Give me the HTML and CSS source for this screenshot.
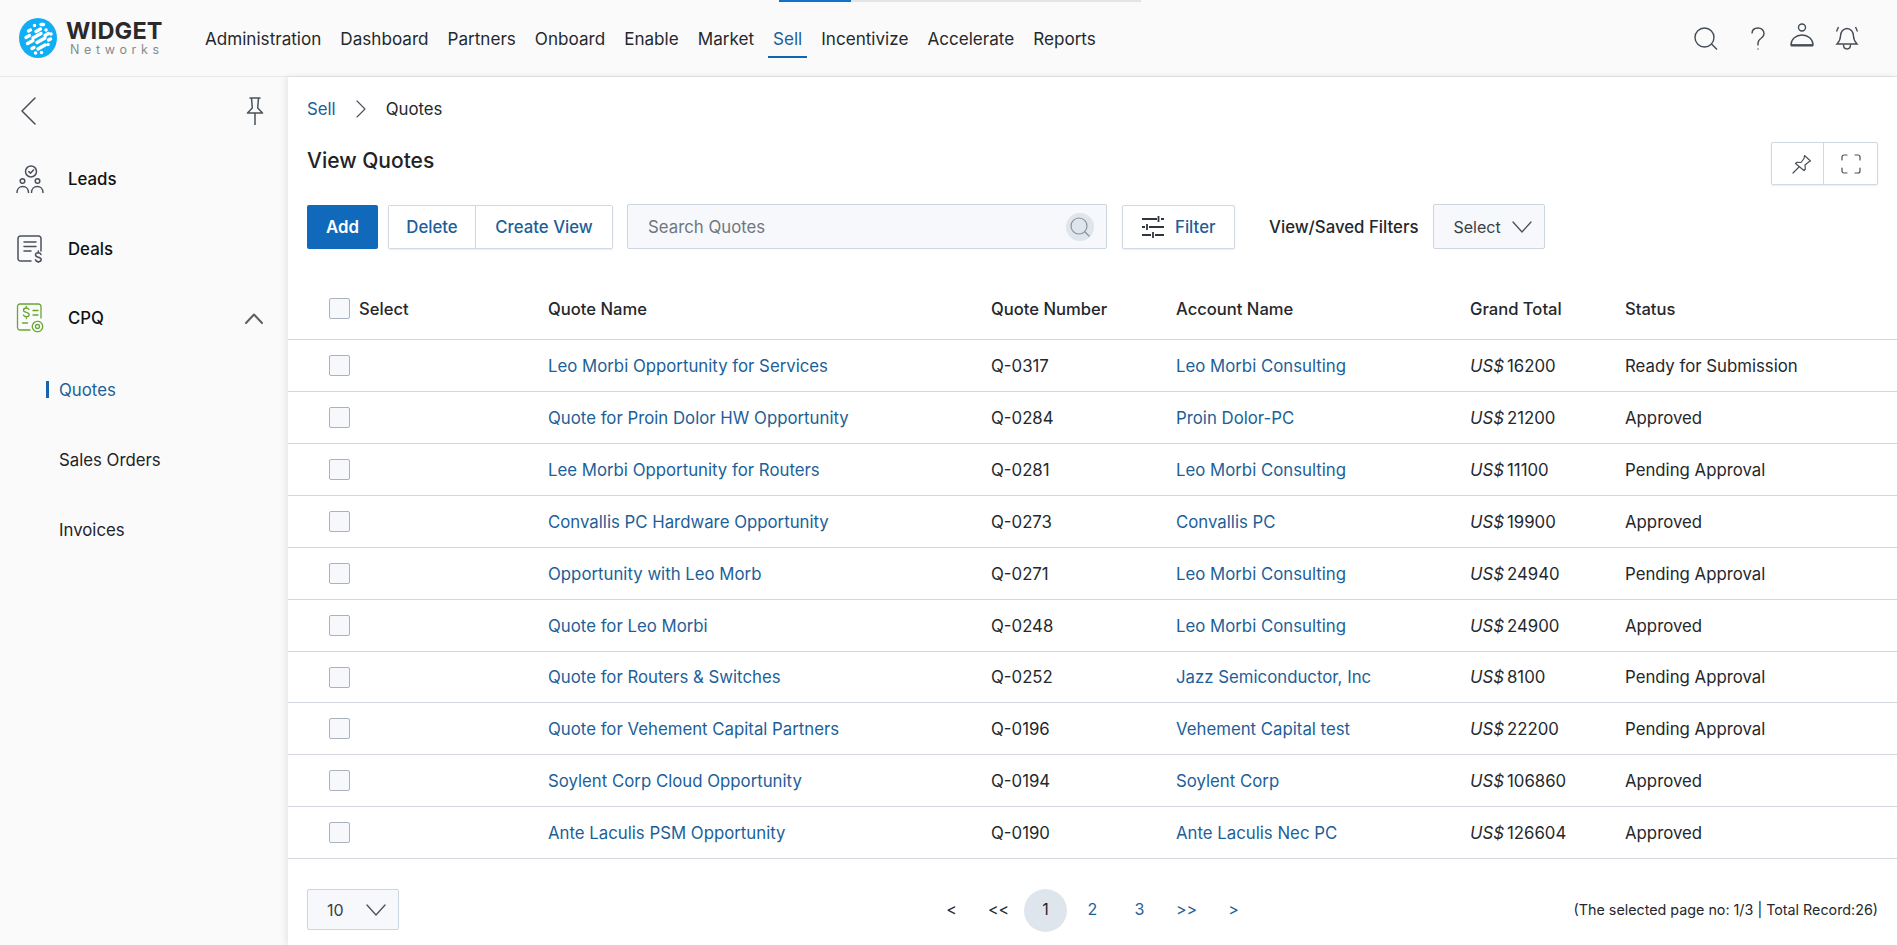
FILE: index.html
```html
<!DOCTYPE html>
<html lang="en">
<head>
<meta charset="utf-8">
<title>View Quotes</title>
<link rel="stylesheet" href="styles.css">
</head>
<body>
<div class="progress"><div class="progress-fill"></div></div>
<header class="topbar">
  <div class="logo">
    <svg class="logo-mark" viewBox="0 0 38 40" width="38" height="40">
      <ellipse cx="19" cy="20" rx="19" ry="20" fill="#11aef5"/>
      <g stroke="#fff" stroke-linecap="round" fill="none" stroke-width="3.400">
        <path d="M15.500 7.500h.1M22 6.500h2.500"/>
        <path d="M9.500 13l2 -1M17 13.500l4.500 -2.500M27 12h.1"/>
        <path d="M7 19.500l3.500 -2M14 20l8 -4.500M26 17.500l3.500 -2M32 16h.1"/>
        <path d="M8.500 25.500l5.500 -3M18 24.500l8 -4.500M29.500 22l2 -1"/>
        <path d="M13 30.500l2 -1M19 31l7 -4M29 26.500h.1"/>
        <path d="M16.500 35h.1M22.500 34.500h.1"/>
      </g>
    </svg>
    <div class="logo-text">
      <span class="logo-name">WIDGET</span>
      <span class="logo-sub">Networks</span>
    </div>
  </div>
  <nav class="topnav">
    <a class="topnav-item">Administration</a>
    <a class="topnav-item">Dashboard</a>
    <a class="topnav-item">Partners</a>
    <a class="topnav-item">Onboard</a>
    <a class="topnav-item">Enable</a>
    <a class="topnav-item">Market</a>
    <a class="topnav-item is-active">Sell</a>
    <a class="topnav-item">Incentivize</a>
    <a class="topnav-item">Accelerate</a>
    <a class="topnav-item">Reports</a>
  </nav>
  <div class="top-icons">
    <svg class="ti ti-search" viewBox="0 0 24 23" width="24" height="23"><circle cx="10.500" cy="10.500" r="9.500"/><path d="M17.500 17l5.500 5.500"/></svg>
    <svg class="ti ti-help" viewBox="0 0 14 24" width="14" height="24"><path d="M1 6.500C1 3 3.500 1 7 1s6 2.500 6 5.500c0 2.500-1.500 3.800-3.200 5C8 12.700 7 14 7 16.500v2"/><path d="M7 21.500v2" stroke-dasharray="1 1"/></svg>
    <svg class="ti ti-user" viewBox="0 0 24 24" width="24" height="24"><circle cx="12" cy="4.500" r="3.500"/><path d="M1 22c0-6 5-10 11-10s11 4 11 10z"/><path d="M1 22.500h22" stroke-width="2"/></svg>
    <svg class="ti ti-bell" viewBox="0 0 24 24" width="24" height="24"><path d="M5.500 10c0-4 2.800-7.500 6.500-7.500s6.500 3.500 6.500 7.500c0 4 1.200 5.500 3.500 8H2c2.300-2.500 3.500-4 3.500-8z"/><path d="M8.500 18.500c0 3 1.500 4.500 3.500 4.500s3.500-1.500 3.500-4.500"/><path d="M3.500 1L1.500 5.500M20.500 1l2 4.500"/></svg>
  </div>
</header>
<div class="layout">
  <aside class="sidebar">
    <div class="side-top">
      <svg class="si" viewBox="0 0 16 28" width="16" height="28"><path d="M15 1L2 14l13 13"/></svg>
      <svg class="si" viewBox="0 0 18 28" width="18" height="28"><path d="M4 1h10M5.500 1l.8 10L1.500 16h15L11.700 11l.8-10M9 16v12"/></svg>
    </div>
    <div class="side-item side-leads">
      <svg class="si side-icon" viewBox="0 0 28 28" width="28" height="28"><circle cx="15" cy="6.500" r="5.500"/><path d="M12.800 6.600l1.700 1.700 3-3.200"/><circle cx="6.500" cy="16" r="2.300"/><circle cx="21.500" cy="16" r="2.300"/><path d="M1 27.500c0-3.500 2.500-6 5.800-6s5.700 2.500 5.700 6M15.500 27.500c0-3.500 2.500-6 5.800-6s5.700 2.500 5.700 6"/></svg>
      <span class="side-label">Leads</span>
    </div>
    <div class="side-item side-deals">
      <svg class="si side-icon" viewBox="0 0 28 28" width="28" height="28"><path d="M15 26H4.500A2.500 2.500 0 0 1 2 23.500V3.500A2.500 2.500 0 0 1 4.500 1h18A2.500 2.500 0 0 1 25 3.500V16"/><path d="M8 7h12M8 11.500h12M8 16h7"/><path d="M25 19.500c-.5-1.200-1.600-1.700-2.700-1.700-1.500 0-2.800.8-2.800 2.200 0 3 5.700 1.500 5.700 4.500 0 1.400-1.300 2.200-2.900 2.200-1.200 0-2.300-.6-2.800-1.800M22.300 16v2M22.300 26.700v1.300"/></svg>
      <span class="side-label">Deals</span>
    </div>
    <div class="side-item side-cpq">
      <svg class="si side-icon is-green" viewBox="0 0 28 30" width="28" height="30"><path d="M14 27H4a2.500 2.500 0 0 1-2.500-2.500v-21A2.500 2.500 0 0 1 4 1h18.500A2.500 2.500 0 0 1 25 3.500V15"/><path d="M13 6.500c-.5-1-1.500-1.500-2.700-1.500-1.600 0-2.800.8-2.800 2.200 0 2.800 5.700 1.500 5.700 4.300 0 1.400-1.300 2.200-2.900 2.200-1.200 0-2.300-.6-2.800-1.600M10.300 3.500V5M10.300 13.700V15.500"/><path d="M17 7.500h5M17 12h5M6.500 20h5"/><circle cx="21.500" cy="23.500" r="5.200" stroke-dasharray="3 .6"/><circle cx="21.500" cy="23.500" r="2"/></svg>
      <span class="side-label">CPQ</span>
      <svg class="si side-caret" viewBox="0 0 18 11" width="18" height="11"><path d="M1 10l8-8.500 8 8.500"/></svg>
    </div>
    <div class="side-sub is-active"><span>Quotes</span></div>
    <div class="side-sub"><span>Sales Orders</span></div>
    <div class="side-sub"><span>Invoices</span></div>
  </aside>
  <main class="content">
    <div class="crumbs">
      <a class="crumb-link">Sell</a>
      <svg class="si crumb-sep" viewBox="0 0 10 18" width="10" height="18"><path d="M1 1l8 8-8 8"/></svg>
      <span>Quotes</span>
    </div>
    <div class="title-row">
      <h1 class="title">View Quotes</h1>
      <div class="tool-group">
        <button class="tool-btn tool-pin"><svg class="si" viewBox="0 0 20 20" width="20" height="20"><path d="M12.500 1.500l6 5.500-1.500 .7-4 3.300.3 4-1.300 1.500L3.500 9.500 5 8.300l4 .2 3-4z"/><path d="M7 13L1 19"/></svg></button>
        <button class="tool-btn tool-full"><svg class="si" viewBox="0 0 20 20" width="20" height="20"><path d="M1 6V3a2 2 0 0 1 2-2h3M14 1h3a2 2 0 0 1 2 2v3M19 14v3a2 2 0 0 1-2 2h-3M6 19H3a2 2 0 0 1-2-2v-3"/></svg></button>
      </div>
    </div>
    <div class="toolbar">
      <button class="btn-primary">Add</button>
      <div class="btn-group">
        <button class="btn-plain btn-delete">Delete</button>
        <button class="btn-plain btn-create">Create View</button>
      </div>
      <div class="search">
        <span class="search-text">Search Quotes</span>
        <span class="search-icon"><svg class="si" viewBox="0 0 20 20" width="20" height="20"><circle cx="9" cy="9" r="8"/><path d="M15 15l4 4"/></svg></span>
      </div>
      <button class="btn-filter">
        <svg class="si filter-icon" viewBox="0 0 24 22" width="24" height="22"><path d="M1 3h15M20 3h3M17.500 0v6M1 11h3M8 11h15M6 8v6M1 19h9M14 19h9M12 16v6"/></svg>
        <span>Filter</span>
      </button>
      <span class="saved-label">View/Saved Filters</span>
      <div class="select select-view"><span>Select</span><svg class="si" viewBox="0 0 20 12" width="20" height="12"><path d="M1 1l9 10 9-10"/></svg></div>
    </div>
    <table class="quotes">
      <colgroup>
        <col class="c-select"><col class="c-name"><col class="c-number"><col class="c-account"><col class="c-total"><col class="c-status">
      </colgroup>
      <thead>
        <tr>
          <th class="cell-select"><span class="check"></span><span class="select-word">Select</span></th>
          <th>Quote Name</th><th>Quote Number</th><th>Account Name</th><th>Grand Total</th><th>Status</th>
        </tr>
      </thead>
      <tbody>
        <tr><td class="cell-select"><span class="check"></span></td><td class="link">Leo Morbi Opportunity for Services</td><td>Q-0317</td><td class="link">Leo Morbi Consulting</td><td><i>US$</i>16200</td><td>Ready for Submission</td></tr>
        <tr><td class="cell-select"><span class="check"></span></td><td class="link">Quote for Proin Dolor HW Opportunity</td><td>Q-0284</td><td class="link">Proin Dolor-PC</td><td><i>US$</i>21200</td><td>Approved</td></tr>
        <tr><td class="cell-select"><span class="check"></span></td><td class="link">Lee Morbi Opportunity for Routers</td><td>Q-0281</td><td class="link">Leo Morbi Consulting</td><td><i>US$</i>11100</td><td>Pending Approval</td></tr>
        <tr><td class="cell-select"><span class="check"></span></td><td class="link">Convallis PC Hardware Opportunity</td><td>Q-0273</td><td class="link">Convallis PC</td><td><i>US$</i>19900</td><td>Approved</td></tr>
        <tr><td class="cell-select"><span class="check"></span></td><td class="link">Opportunity with Leo Morb</td><td>Q-0271</td><td class="link">Leo Morbi Consulting</td><td><i>US$</i>24940</td><td>Pending Approval</td></tr>
        <tr><td class="cell-select"><span class="check"></span></td><td class="link">Quote for Leo Morbi</td><td>Q-0248</td><td class="link">Leo Morbi Consulting</td><td><i>US$</i>24900</td><td>Approved</td></tr>
        <tr class="row-short"><td class="cell-select"><span class="check"></span></td><td class="link">Quote for Routers &amp; Switches</td><td>Q-0252</td><td class="link">Jazz Semiconductor, Inc</td><td><i>US$</i>8100</td><td>Pending Approval</td></tr>
        <tr><td class="cell-select"><span class="check"></span></td><td class="link">Quote for Vehement Capital Partners</td><td>Q-0196</td><td class="link">Vehement Capital test</td><td><i>US$</i>22200</td><td>Pending Approval</td></tr>
        <tr><td class="cell-select"><span class="check"></span></td><td class="link">Soylent Corp Cloud Opportunity</td><td>Q-0194</td><td class="link">Soylent Corp</td><td><i>US$</i>106860</td><td>Approved</td></tr>
        <tr><td class="cell-select"><span class="check"></span></td><td class="link">Ante Laculis PSM Opportunity</td><td>Q-0190</td><td class="link">Ante Laculis Nec PC</td><td><i>US$</i>126604</td><td>Approved</td></tr>
      </tbody>
    </table>
    <div class="footer">
      <div class="select select-size"><span>10</span><svg class="si" viewBox="0 0 20 12" width="20" height="12"><path d="M1 1l9 10 9-10"/></svg></div>
      <div class="pager">
        <a class="page dark">&lt;</a>
        <a class="page dark">&lt;&lt;</a>
        <a class="page current">1</a>
        <a class="page">2</a>
        <a class="page">3</a>
        <a class="page">&gt;&gt;</a>
        <a class="page">&gt;</a>
      </div>
      <div class="record">(The selected page no: 1/3 <span class="record-bar">|</span> Total Record:26)</div>
    </div>
  </main>
</div>
</body>
</html>
```
FILE: styles.css
```css
* { box-sizing: border-box; }
html, body { margin: 0; height: 100%; }
body {
  width: 1897px;
  height: 945px;
  overflow: hidden;
  position: relative;
  display: flex;
  flex-direction: column;
  background: #fff;
  color: #1f2328;
  font-family: Inter, "Liberation Sans", sans-serif;
  font-size: 16.8px;
}
.progress {
  position: absolute;
  left: 779px;
  top: 0;
  width: 362px;
  height: 2px;
  background: #e3e4e6;
}
.progress-fill { width: 72px; height: 2px; background: #0f74c9; }

.topbar {
  flex: none;
  height: 77px;
  display: flex;
  align-items: center;
  padding-left: 19px;
  background: #fafafa;
  border-bottom: 1px solid #e4e7ec;
}
.logo { display: flex; align-items: center; width: 181px; margin-top: -1px; }
.logo-mark { flex: none; }
.logo-text { display: flex; flex-direction: column; margin-left: 9px; line-height: 1; }
.logo-name { font-size: 23.5px; font-weight: 700; color: #2a2a2c; letter-spacing: .2px; line-height: 24px; }
.logo-sub { font-size: 12.5px; color: #8a8a8c; letter-spacing: 4.6px; line-height: 14px; margin-left: 4px; }
.topnav { display: flex; gap: 9px; font-size: 17.1px; }
.topnav-item {
  padding: 0 5px;
  height: 34px;
  line-height: 30px;
  margin-top: 5px;
  color: #24282d;
  border-bottom: 2px solid transparent;
}
.topnav-item.is-active { color: #1d5f99; border-bottom-color: #1465ad; }
.top-icons { margin-left: auto; display: flex; align-items: flex-start; width: 203px; height: 30px; margin-top: -3px; }
.ti { fill: none; stroke: #454c55; stroke-width: 1.4; }
.ti-search { margin-top: 5px; }
.ti-help { margin: 5px 0 0 33px; }
.ti-user { margin: 1px 0 0 25px; }
.ti-bell { margin: 4px 0 0 21px; }

.layout { flex: 1; display: flex; min-height: 0; }
.si { fill: none; stroke: #4a515b; stroke-width: 1.5; stroke-linecap: round; stroke-linejoin: round; flex: none; }
.sidebar {
  flex: none;
  width: 288px;
  background: #fafafa;
  padding-top: 20px;
}
.side-top {
  display: flex;
  justify-content: space-between;
  padding: 0 24px 0 20px;
  height: 30px;
}
.side-item { display: flex; align-items: center; height: 30px; padding-left: 16px; }
.side-leads { margin-top: 37px; }
.side-deals { margin-top: 40px; padding-left: 16px; }
.side-cpq { margin-top: 39px; }
.side-icon { width: 28px; }
.side-icon.is-green { stroke: #69a535; stroke-width: 1.3; }
.side-label { margin-left: 24px; font-weight: 500; color: #101215; }
.side-caret { margin-left: auto; margin-right: 25px; stroke: #5a6068; stroke-width: 2; }
.side-sub {
  height: 70px;
  display: flex;
  align-items: center;
  padding-left: 59px;
  color: #1f2328;
  position: relative;
}
.side-sub.is-active { margin-top: 22px; color: #1d5f99; }
.side-sub.is-active::before {
  content: "";
  position: absolute;
  left: 46px;
  top: 26px;
  width: 3px;
  height: 17px;
  background: #1465ad;
}

.content {
  flex: 1;
  min-width: 0;
  padding-top: 22px;
  background: #fff;
  position: relative;
  box-shadow: -2px 0 6px rgba(40, 50, 70, .1);
}
.crumbs { display: flex; align-items: center; height: 20px; margin-left: 19px; color: #24282d; }
.crumb-link { color: #1d5f99; }
.crumb-sep { margin: 0 20px 0 20px; stroke-width: 1.1; }
.title-row { display: flex; justify-content: space-between; margin: 23px 19px 0 19px; height: 43px; }
.title { margin: 7px 0 0; font-size: 21px; font-weight: 500; line-height: 24px; color: #1f2328; }
.tool-group {
  display: flex;
  width: 107px;
  height: 43px;
  border: 1px solid #d2d8e0;
  border-radius: 2px;
  background: #fff;
  box-shadow: 0 1px 2px rgba(60, 70, 90, .1);
}
.tool-btn { padding: 0; background: none; border: 0; display: flex; align-items: center; justify-content: center; }
.tool-pin { width: 52px; border-right: 1px solid #d2d8e0; padding-left: 8px; }
.tool-full { flex: 1; }
.tool-btn .si { stroke-width: 1.2; }

.toolbar { display: flex; align-items: center; margin: 19px 19px 0; height: 45px; }
button { font-family: inherit; font-size: 16.8px; }
.btn-primary {
  width: 71px;
  height: 44px;
  background: #1069bb;
  color: #fff;
  font-weight: 600;
  border: 0;
  border-radius: 2px;
}
.btn-group {
  display: flex;
  margin-left: 10px;
  height: 44px;
  border: 1px solid #d2d8e0;
  border-radius: 2px;
  box-shadow: 0 1px 2px rgba(60, 70, 90, .1);
}
.btn-plain { background: #fff; border: 0; color: #1d5f99; font-weight: 500; padding: 0; }
.btn-delete { width: 87px; border-right: 1px solid #d2d8e0; }
.btn-create { width: 136px; }
.search {
  width: 480px;
  height: 45px;
  margin-left: 14px;
  padding: 0 12px 0 20px;
  display: flex;
  align-items: center;
  justify-content: space-between;
  background: #f6f8fb;
  border: 1px solid #cdd5df;
  border-radius: 2px;
}
.search-text { color: #71767d; }
.search-icon {
  width: 28px;
  height: 28px;
  border-radius: 50%;
  background: #dfe5ed;
  display: flex;
  align-items: center;
  justify-content: center;
}
.search-icon .si { stroke: #8a929c; stroke-width: 1.2; }
.btn-filter {
  width: 113px;
  height: 44px;
  margin-left: 15px;
  background: #fff;
  color: #1d5f99;
  font-weight: 500;
  display: flex;
  align-items: center;
  gap: 10px;
  padding: 0 0 0 18px;
  border: 1px solid #d2d8e0;
  border-radius: 2px;
  box-shadow: 0 1px 2px rgba(60, 70, 90, .1);
}
.filter-icon { stroke: #2f3640; stroke-width: 1.8; stroke-linecap: butt; }
.saved-label { margin-left: 34px; color: #24282d; font-weight: 500; white-space: nowrap; }
.select {
  display: flex;
  align-items: center;
  justify-content: space-between;
  background: #f6f8fb;
  border: 1px solid #cdd5df;
  border-radius: 2px;
  color: #3a3f46;
}
.select-view { width: 112px; height: 45px; margin-left: 15px; padding: 0 12px 0 19px; font-size: 16px; }
.select .si { stroke-width: 1.3; }

.quotes { width: 100%; table-layout: fixed; border-collapse: separate; border-spacing: 0; margin-top: 20px; }
.c-select { width: 260px; }
.c-name { width: 443px; }
.c-number { width: 185px; }
.c-account { width: 294px; }
.c-total { width: 155px; }
.quotes th, .quotes td {
  text-align: left;
  padding: 0;
  white-space: nowrap;
  border-bottom: 1px solid #d3d8de;
  color: #24282d;
}
.quotes th { height: 71px; font-weight: 500; padding-top: 9px; font-size: 16.6px; }
.quotes td { height: 52px; }
.row-short td { height: 51px; }
.quotes .cell-select { padding-left: 41px; }
.quotes td.link { color: #1d5f99; }
.quotes i { margin-right: 3px; }
.check {
  display: inline-block;
  width: 21px;
  height: 21px;
  vertical-align: middle;
  background: #f6f8fb;
  border: 1px solid #a9b2bd;
  border-radius: 2px;
}
.select-word { margin-left: 9px; vertical-align: middle; }

.footer { display: flex; align-items: flex-start; margin: 30px 19px 0; font-size: 16px; }
.select-size { width: 92px; height: 41px; padding: 0 12px 0 19px; color: #3a3f46; }
.pager { display: flex; margin-left: 529px; }
.page { width: 47px; height: 43px; line-height: 41px; text-align: center; color: #1d5f99; }
.page.dark { color: #24282d; }
.page.current { width: 43px; margin: 0 2px; border-radius: 50%; background: #dfe5ed; color: #24282d; }
.record { margin-left: auto; font-size: 14.3px; line-height: 41px; color: #24282d; white-space: nowrap; }
.record-bar { color: #111; }
```
